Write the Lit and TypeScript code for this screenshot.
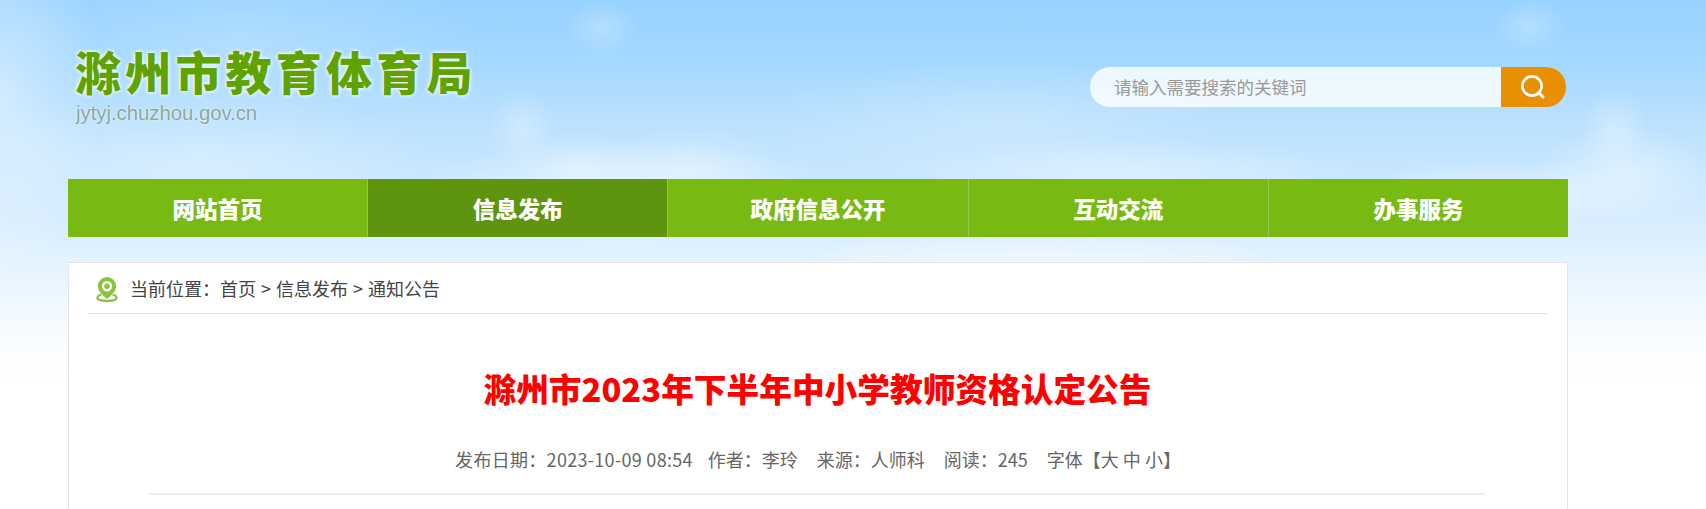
import { LitElement, html, css } from "lit";
import { customElement } from "lit/decorators.js";

const NAV = ["网站首页", "信息发布", "政府信息公开", "互动交流", "办事服务"];

@customElement("app-root")
export class AppRoot extends LitElement {
  static styles = css`
    :host {
      display: block;
      height: 509px;
      overflow: hidden;
      font-family: "Noto Sans CJK SC", "Liberation Sans", sans-serif;
      background:
        radial-gradient(ellipse 34px 40px at 522px 128px, rgba(255,255,255,.3), transparent 100%),
        radial-gradient(ellipse 70px 40px at 580px 170px, rgba(255,255,255,.3), transparent 100%),
        radial-gradient(ellipse 90px 45px at 690px 170px, rgba(255,255,255,.3), transparent 100%),
        radial-gradient(ellipse 220px 55px at 620px 195px, rgba(255,255,255,.45), transparent 100%),
        radial-gradient(ellipse 36px 28px at 602px 28px, rgba(255,255,255,.24), transparent 100%),
        radial-gradient(ellipse 36px 28px at 1530px 26px, rgba(255,255,255,.24), transparent 100%),
        radial-gradient(ellipse 34px 40px at 1615px 128px, rgba(255,255,255,.32), transparent 100%),
        radial-gradient(ellipse 90px 50px at 1625px 175px, rgba(255,255,255,.42), transparent 100%),
        radial-gradient(ellipse 150px 36px at 1500px 195px, rgba(255,255,255,.4), transparent 100%),
        radial-gradient(ellipse 260px 36px at 1040px 265px, rgba(255,255,255,.5), transparent 100%),
        radial-gradient(ellipse 240px 34px at 1120px 172px, rgba(255,255,255,.35), transparent 100%),
        radial-gradient(ellipse 240px 60px at 1000px 120px, rgba(255,255,255,.2), transparent 100%),
        radial-gradient(ellipse 100px 200px at 0px 90px, rgba(255,255,255,.42), transparent 100%),
        radial-gradient(ellipse 240px 70px at 200px 160px, rgba(255,255,255,.3), transparent 100%),
        radial-gradient(ellipse 240px 90px at 240px 40px, rgba(255,255,255,.18), transparent 100%),
        linear-gradient(180deg, #98d2ff 0%, #a4d8ff 60px, #bde2fe 130px, #d3ebfe 210px, #e6f4ff 270px, #f5faff 320px, #fcfeff 355px, #fff 380px);
    }
    .wrap { width: 1500px; margin-left: 68px; }
    .head { height: 179px; box-sizing: border-box; display: flex; justify-content: space-between; align-items: flex-start; }
    .logo { padding: 40px 0 0 7px; }
    .logo-name {
      font-size: 46px; line-height: 60px; font-weight: 900; color: #5fa300; letter-spacing: 4.2px; white-space: nowrap;
      text-shadow: 0 0 5px #fff, 0 0 3px rgba(255,255,255,.9);
    }
    .logo-url {
      font-family: "Liberation Sans", sans-serif; font-size: 20.3px; line-height: 20px; color: #8aa89a; margin: 3px 0 0 1px;
      text-shadow: 0 0 2px #fff;
    }
    .search { margin: 67px 2px 0 0; width: 476px; height: 40px; display: flex; border-radius: 20px; overflow: hidden; }
    .search-text {
      flex: 1; box-sizing: border-box; padding-left: 24px; background: rgba(255,255,255,.8); color: #999; font-size: 17.5px; line-height: 40px;
    }
    .search-btn { width: 65px; background: #e98f04; display: flex; align-items: center; justify-content: center; }
    .search-btn svg { width: 28px; height: 28px; margin-left: -2px; }
    nav { display: flex; height: 58px; background: #78ba11; }
    .item {
      flex: 1; color: #fff; font-size: 22.5px; font-weight: 900; line-height: 58px; text-align: center; box-sizing: border-box;
      border-left: 1px solid #93c64a;
    }
    .item:first-child { border-left: 0; }
    .item.on { background: #5f940f; }
    .card { margin-top: 25px; height: 400px; background: #fff; border: 1px solid #e4e4e4; box-sizing: border-box; padding: 0 19px; }
    .crumb {
      height: 51px; box-sizing: border-box; border-bottom: 1px solid #e1e1e1; display: flex; align-items: center; gap: 12px; padding-left: 8px;
      font-size: 18px; color: #444; padding-bottom: 1px; word-spacing: 1px;
    }
    .crumb svg { width: 22px; height: 26px; margin-top: 3px; }
    h1 { margin: 44px 0 0; font-size: 32.7px; line-height: 60px; color: #f00; font-weight: 900; text-align: center; padding-right: 1px; }
    .meta { margin-top: 26px; font-size: 18px; line-height: 30px; color: #666; text-align: center; }
    .meta span { margin: 0 9.5px; }
    .meta .date { letter-spacing: .3px; margin-right: 5.5px; }
    hr { border: 0; border-top: 2px solid #efefef; margin: 19px 0 0 61px; width: 1336px; }
  `;

  render() {
    return html`
      <div class="wrap">
        <header class="head">
          <div class="logo">
            <div class="logo-name">滁州市教育体育局</div>
            <div class="logo-url">jytyj.chuzhou.gov.cn</div>
          </div>
          <div class="search">
            <div class="search-text">请输入需要搜索的关键词</div>
            <div class="search-btn">
              <svg viewBox="0 0 28 28" fill="none" stroke="#fff" stroke-linecap="round">
                <circle cx="13" cy="13" r="9.6" stroke-width="2.6" />
                <path d="M20.500 20.500 L24 24" stroke-width="3" />
              </svg>
            </div>
          </div>
        </header>
        <nav>
          ${NAV.map((n, i) => html`<div class="item ${i === 1 ? "on" : ""}">${n}</div>`)}
        </nav>
        <main class="card">
          <div class="crumb">
            <svg viewBox="0 0 24 28">
              <path fill="#8ac43f" d="M12 1a10 10 0 0 0-10 10c0 5.400 6 10.600 10 14 4-3.400 10-8.600 10-14a10 10 0 0 0-10-10z"/>
              <circle cx="12" cy="11" r="5.600" fill="#fff"/>
              <circle cx="12" cy="11" r="3" fill="#8ac43f"/>
              <path fill="none" stroke="#8ac43f" stroke-width="2.400" d="M6 20C3 20.800 1.500 22 1.500 23.500 1.500 25.600 6 27 12 27s10.500-1.400 10.500-3.500c0-1.500-1.500-2.700-4.500-3.500"/>
            </svg>
            <div>当前位置&#xFF1A;首页 &gt; 信息发布 &gt; 通知公告</div>
          </div>
          <h1>滁州市2023年下半年中小学教师资格认定公告</h1>
          <div class="meta"><span class="date">发布日期&#xFF1A;2023-10-09 08:54</span><span>作者&#xFF1A;李玲</span><span>来源&#xFF1A;人师科</span><span>阅读&#xFF1A;245</span><span>字体【大 中 小】</span></div>
          <hr />
        </main>
      </div>
    `;
  }
}
